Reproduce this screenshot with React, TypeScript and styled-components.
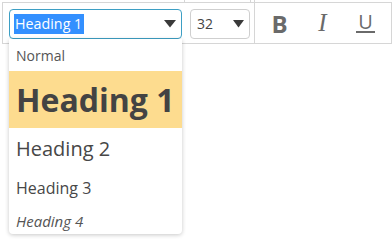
import React from "react";
import styled, { createGlobalStyle } from "styled-components";

const Global = createGlobalStyle`
  html, body { margin: 0; padding: 0; background: #fff; }
  body { font-family: "Open Sans", "Noto Sans", sans-serif; width: 392px; height: 243px; overflow: hidden; }
`;

const Page = styled.div`
  padding-left: 2px;
`;

const TopRow = styled.div`
  display: flex;
  height: 2px;
`;

const TopCell = styled.div<{ $w: number }>`
  width: ${(p) => p.$w}px;
  border-right: 1px solid #d6d6d6;
  flex: none;
`;

const Toolbar = styled.div`
  display: flex;
  align-items: stretch;
  width: 388px;
  height: 40px;
  border: 1px solid #d6d6d6;
`;

const SelectGroup = styled.div`
  display: flex;
  align-items: flex-start;
  gap: 8px;
  padding: 6px 0 0 6px;
`;

const SelectWrap = styled.div`
  position: relative;
`;

const Select = styled.div<{ $w: number; $focused?: boolean }>`
  box-sizing: border-box;
  width: ${(p) => p.$w}px;
  height: 30px;
  display: flex;
  align-items: center;
  justify-content: space-between;
  padding: 0 5px 0 5px;
  border: 1px solid ${(p) => (p.$focused ? "#3d9fc4" : "#cfcfcf")};
  border-radius: 4px;
  background: #fff;
  font-size: 14px;
  color: #444;
`;

const Selected = styled.span`
  display: inline-block;
  background: #3390ff;
  color: #fff;
  height: 20px;
  line-height: 20px;
  padding: 0 2px 0 1px;
  margin-left: -1px;
  font-size: 14.3px;
`;

const Plain = styled.span`
  padding-left: 1px;
  line-height: 20px;
`;

const Arrow = () => (
  <svg width="12" height="8" viewBox="0 0 12 8">
    <path d="M0 0 H12 L6 7.5 Z" fill="#3a3a3a" />
  </svg>
);

const SmallArrow = () => (
  <svg width="11" height="8" viewBox="0 0 11 8">
    <path d="M0 0 H11 L5.5 7.5 Z" fill="#3a3a3a" />
  </svg>
);

const ArrowBox = styled.span<{ $mr: number }>`
  display: flex;
  margin-right: ${(p) => p.$mr}px;
`;

const Menu = styled.ul`
  position: absolute;
  top: 100%;
  left: 0;
  width: 173px;
  margin: 0;
  padding: 0;
  list-style: none;
  background: #fff;
  border-radius: 0 0 4px 4px;
  box-shadow: 0 1px 4px rgba(0, 0, 0, 0.22);
  z-index: 5;
`;

const Item = styled.li<{
  $h: number;
  $size: number;
  $bold?: boolean;
  $italic?: boolean;
  $active?: boolean;
  $color: string;
}>`
  height: ${(p) => p.$h}px;
  display: flex;
  align-items: center;
  padding-left: 7px;
  font-size: ${(p) => p.$size}px;
  font-weight: ${(p) => (p.$bold ? 700 : 400)};
  font-style: ${(p) => (p.$italic ? "italic" : "normal")};
  color: ${(p) => p.$color};
  background: ${(p) => (p.$active ? "#fddc8f" : "transparent")};
  white-space: nowrap;
`;

const Divider = styled.div`
  width: 1px;
  background: #d6d6d6;
  margin-left: 4px;
  margin-top: -3px;
`;

const Buttons = styled.div`
  display: flex;
  padding-left: 3px;
`;

const FmtButton = styled.button<{ $kind: "b" | "i" | "u" }>`
  width: 43px;
  height: 40px;
  border: 0;
  padding: 0;
  background: transparent;
  display: flex;
  align-items: center;
  justify-content: center;
  color: #6a6a6a;
  font-family: ${(p) =>
    p.$kind === "i" ? '"Liberation Serif", serif' : '"Open Sans", sans-serif'};
  font-size: ${(p) => (p.$kind === "b" ? 24 : p.$kind === "i" ? 25 : 20)}px;
  font-weight: ${(p) => (p.$kind === "b" ? 700 : 400)};
  font-style: ${(p) => (p.$kind === "i" ? "italic" : "normal")};
`;

const Under = styled.span`
  display: inline-block;
  line-height: 18px;
  padding: 0 2px;
  border-bottom: 2px solid #6a6a6a;
`;

export default function App() {
  return (
    <Page>
      <Global />
      <TopRow>
        <TopCell $w={182} />
        <TopCell $w={65} />
      </TopRow>
      <Toolbar>
        <SelectGroup>
          <SelectWrap>
            <Select $w={173} $focused>
              <Selected>Heading 1</Selected>
              <ArrowBox $mr={0}>
                <Arrow />
              </ArrowBox>
            </Select>
            <Menu>
              <Item $h={32} $size={14} $color="#555">
                Normal
              </Item>
              <Item $h={57} $size={32} $bold $active $color="#434343">
                Heading 1
              </Item>
              <Item $h={41} $size={20} $color="#474747">
                Heading 2
              </Item>
              <Item $h={38} $size={16} $color="#474747">
                Heading 3
              </Item>
              <Item $h={27} $size={15} $italic $color="#555">
                Heading 4
              </Item>
            </Menu>
          </SelectWrap>
          <Select $w={60}>
            <Plain>32</Plain>
            <ArrowBox $mr={0}>
              <SmallArrow />
            </ArrowBox>
          </Select>
        </SelectGroup>
        <Divider />
        <Buttons>
          <FmtButton $kind="b">B</FmtButton>
          <FmtButton $kind="i">I</FmtButton>
          <FmtButton $kind="u">
            <Under>U</Under>
          </FmtButton>
        </Buttons>
      </Toolbar>
    </Page>
  );
}
